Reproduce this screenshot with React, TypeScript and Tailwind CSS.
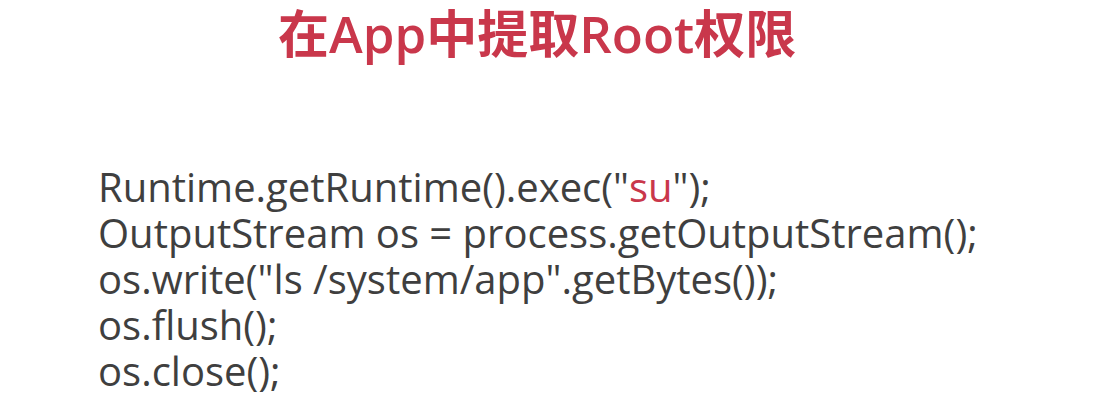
export default function App() {
  const lines = [
    <>Runtime.getRuntime().exec("<span className="text-[#c9374b]">su</span>");</>,
    <>OutputStream os = process.getOutputStream();</>,
    <>os.write("ls /system/app".getBytes());</>,
    <>os.flush();</>,
    <>os.close();</>,
  ]

  return (
    <div className="w-[1111px] h-[412px] bg-white overflow-hidden font-['Open_Sans','Noto_Sans_CJK_SC',sans-serif]">
      <h1 className="pl-[278px] text-[51px] leading-[66px] font-semibold text-[#c9374b]">
        在App中提取Root权限
      </h1>
      <div className="pl-[98px] pt-[98px] text-[40px] leading-[46px] text-[#3f3f3f]">
        {lines.map((line, i) => (
          <div key={i}>{line}</div>
        ))}
      </div>
    </div>
  )
}
